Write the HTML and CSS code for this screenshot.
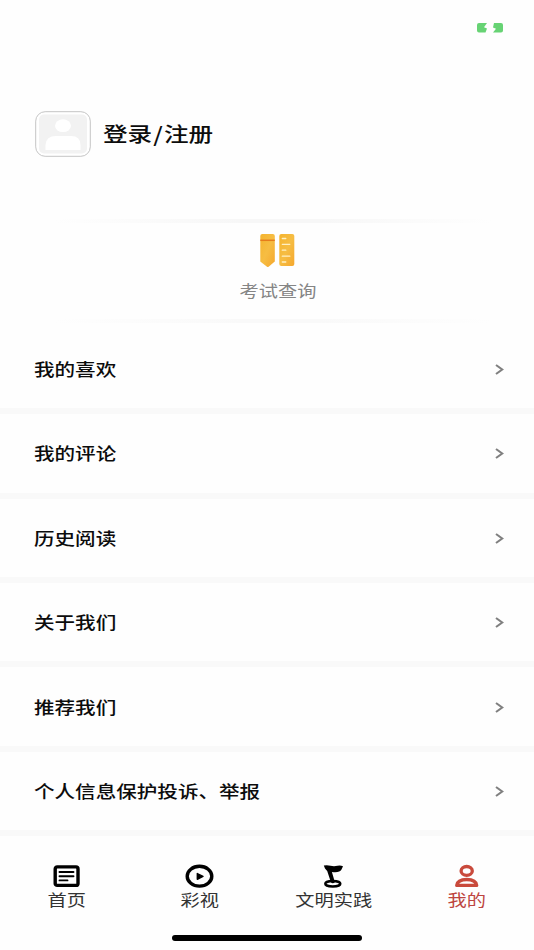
FILE: index.html
```html
<!DOCTYPE html>
<html lang="zh-CN">
<head>
<meta charset="utf-8">
<title>我的</title>
<link rel="stylesheet" href="styles.css">
</head>
<body>
<header class="status">
  <svg class="battery" width="28" height="12" viewBox="0 0 28 12"><path fill="#67d374" d="M3 1H11L8 5.3L11 6.500L9.500 10.500H3Q1 10.500 1 8.500V3Q1 1 3 1ZM18 1H25Q27 1 27 3V8.500Q27 10.500 25 10.500H17L20 6.800L17 5.500Z"/></svg>
</header>
<section class="profile">
  <svg class="avatar" width="56" height="46" viewBox="0 0 56 46"><rect x=".7" y=".7" width="54.6" height="44.6" rx="9.5" fill="#fff" stroke="#bdbdbd" stroke-width=".9"/><rect x="4" y="3.5" width="48" height="39" rx="5" fill="#f2f2f2"/><ellipse cx="28" cy="14.7" rx="8" ry="6.4" fill="#fff"/><path fill="#fff" d="M10.5 39V34Q11 25 21 25H36Q45.500 25 45.500 34V39Z"/></svg>
  <span class="login">登录<span class="slash">/</span>注册</span>
</section>
<section class="card">
  <svg class="exam" width="36" height="34" viewBox="0 0 36 34">
    <defs><linearGradient id="gold" x2="1" y2="1"><stop stop-color="#f5b42e"/><stop offset=".5" stop-color="#f6bd43"/><stop offset="1" stop-color="#f5a72d"/></linearGradient></defs>
    <path fill="url(#gold)" d="M2.300 0H12.800Q14.800 0 14.800 2V27.500L8.600 32.800Q7.800 33.400 7 32.800L.3 27.500V2Q.3 0 2.300 0Z"/>
    <path stroke="#e67c1c" stroke-width="1.500" d="M.3 6.300H14.800"/>
    <rect x="19.300" y="0" width="15" height="32" rx="2" fill="url(#gold)"/>
    <path stroke="#fff0c2" stroke-width="1.300" stroke-linecap="round" d="M22.300 4.500H25.800M22.300 10.300H29.800M22.300 16.200H25.800M22.300 22.200H29.800M22.300 28H25.800"/>
  </svg>
  <span class="exam-label">考试查询</span>
</section>
<main class="list">
  <div class="row"><span class="name">我的喜欢</span><svg class="arrow" viewBox="0 0 9 11"><path d="M1 1L7.200 5.500L1 10"/></svg></div>
  <div class="row"><span class="name">我的评论</span><svg class="arrow" viewBox="0 0 9 11"><path d="M1 1L7.200 5.500L1 10"/></svg></div>
  <div class="row"><span class="name">历史阅读</span><svg class="arrow" viewBox="0 0 9 11"><path d="M1 1L7.200 5.500L1 10"/></svg></div>
  <div class="row"><span class="name">关于我们</span><svg class="arrow" viewBox="0 0 9 11"><path d="M1 1L7.200 5.500L1 10"/></svg></div>
  <div class="row"><span class="name">推荐我们</span><svg class="arrow" viewBox="0 0 9 11"><path d="M1 1L7.200 5.500L1 10"/></svg></div>
  <div class="row"><span class="name">个人信息保护投诉、举报</span><svg class="arrow" viewBox="0 0 9 11"><path d="M1 1L7.200 5.500L1 10"/></svg></div>
</main>
<nav class="tabs">
  <div class="tab"><svg width="30" height="24" viewBox="0 0 30 24"><rect x="3.200" y="2.900" width="22.800" height="18.500" rx="2" fill="none" stroke="#000" stroke-width="3.400"/><path stroke="#000" stroke-width="1.900" stroke-linecap="round" d="M7.500 8H21.500M7.500 12.200H21.500M7.500 16.400H15.500"/></svg><span>首页</span></div>
  <div class="tab"><svg width="30" height="24" viewBox="0 0 30 24"><ellipse cx="14.500" cy="12.200" rx="12.300" ry="9.900" fill="none" stroke="#000" stroke-width="3.400"/><path stroke="#000" stroke-width="1.400" stroke-linejoin="round" d="M12.300 9.500L18 12.400L12.300 15.300Z"/></svg><span>彩视</span></div>
  <div class="tab"><svg width="30" height="24" viewBox="0 0 30 24"><ellipse cx="13.800" cy="19.800" rx="7.500" ry="2.700" fill="none" stroke="#000" stroke-width="2.500"/><path d="M4.800 1.600Q8 .8 11.500 1.800Q15 2.700 18.500 1.800Q21.500 1.100 24 2.300L22.500 5.500Q20.500 9.200 12.900 8L15.900 18.200Q14 20.300 12 18.500L8.200 7L6 4.500Z"/></svg><span>文明实践</span></div>
  <div class="tab active"><svg width="30" height="24" viewBox="0 0 30 24"><g fill="none" stroke="#c94a3c" stroke-width="3.300" stroke-linejoin="round"><ellipse cx="14.700" cy="6.900" rx="5.600" ry="4.400"/><path d="M4.700 21.400H24.700Q24 15.600 14.700 15.500Q5.500 15.600 4.700 21.400Z"/></g></svg><span>我的</span></div>
</nav>
<footer class="home"><div class="bar"></div></footer>
</body>
</html>
```
FILE: styles.css
```css
* { box-sizing: border-box; }
html { overflow: hidden; }
body {
  margin: 0;
  width: 534px;
  height: 950px;
  overflow: hidden;
  display: flex;
  flex-direction: column;
  background: #fefefe;
  color: #0c0c0c;
  font-family: "Noto Sans CJK SC", sans-serif;
}
svg { display: block; flex: none; }
.status {
  height: 111px;
  padding: 22px 30px 0;
  display: flex;
  justify-content: flex-end;
}
.profile {
  height: 106px;
  padding-left: 35px;
  display: flex;
  align-items: flex-start;
  gap: 12.4px;
}
.login {
  font-size: 20.5px;
  line-height: 44px;
  font-weight: 500;
  transform: scaleX(1.2);
  transform-origin: left;
}
.slash { margin: 0 0.9px; }
.card {
  height: 112.8px;
  padding: 17px 0 0 22px;
  display: flex;
  flex-direction: column;
  align-items: center;
  background:
    linear-gradient(90deg, transparent 10%, #f7f7f7 45%, #f7f7f7 60%, transparent 92%) 0 2px / 100% 4px no-repeat,
    linear-gradient(90deg, transparent 10%, #f9f9f9 45%, #f9f9f9 60%, transparent 92%) 0 102px / 100% 4px no-repeat;
}
.exam-label {
  margin-top: 9.6px;
  font-size: 16px;
  line-height: 24px;
  color: #858585;
  transform: scaleX(1.2);
}
.row {
  height: 84.4px;
  padding: 0 29.7px 0 34.4px;
  border-bottom: 6px solid #f9f9f9;
  display: flex;
  align-items: center;
  justify-content: space-between;
}
.name {
  font-size: 17.5px;
  line-height: 26px;
  font-weight: 500;
  transform: scaleX(1.175);
  transform-origin: left;
}
.arrow {
  width: 9px;
  height: 11px;
  margin-top: 1px;
  fill: none;
  stroke: #808080;
  stroke-width: 2.1;
}
.tabs {
  height: 97px;
  padding-top: 28px;
  display: grid;
  grid-template-columns: repeat(4, 1fr);
}
.tab {
  display: flex;
  flex-direction: column;
  align-items: center;
}
.tab span {
  margin-top: -1.4px;
  font-size: 16px;
  line-height: 24px;
  color: #333;
  transform: translateX(-0.3px) scaleX(1.2);
}
.tab.active span { color: #bd4540; }
.home {
  display: flex;
  justify-content: center;
}
.bar {
  width: 190px;
  height: 6px;
  margin-top: 2px;
  border-radius: 3px;
  background: #000;
}
```
